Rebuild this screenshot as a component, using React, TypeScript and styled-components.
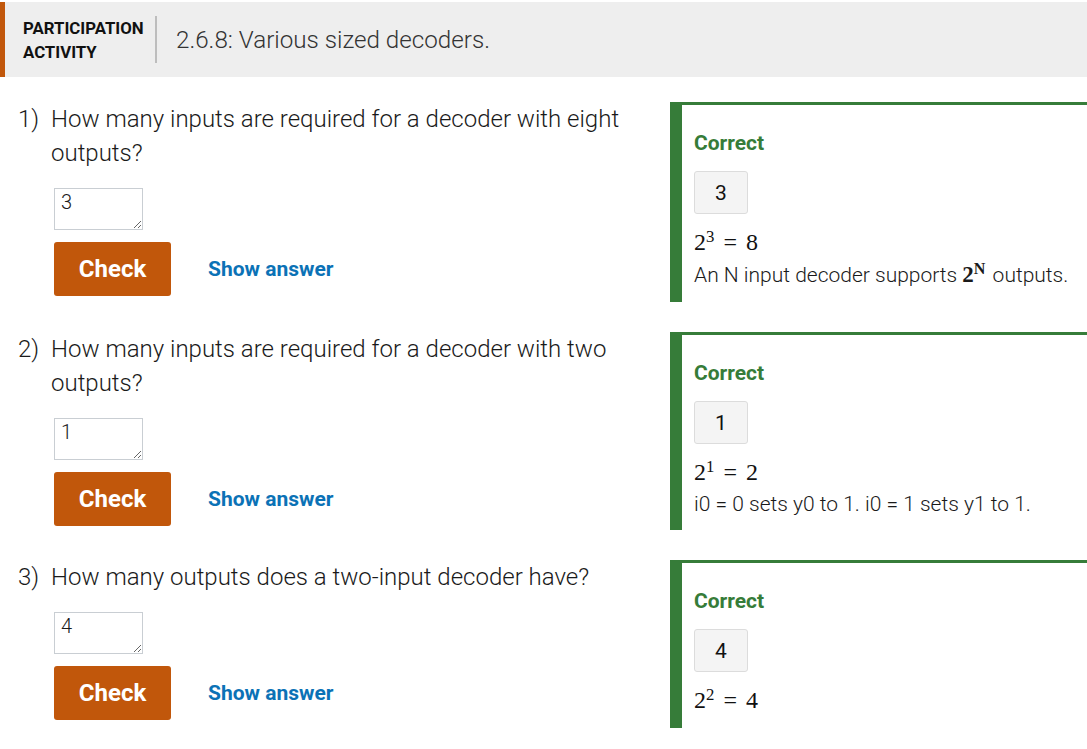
import React from "react";
import styled, { createGlobalStyle } from "styled-components";

const GlobalStyle = createGlobalStyle`
  html, body { margin: 0; padding: 0; background: #ffffff; }
  body { font-family: Roboto, "Liberation Sans", Arial, sans-serif; color: #222; overflow: hidden; }
  * { box-sizing: border-box; }
`;

const Page = styled.div`
  padding-top: 2px;
  width: 1087px;
`;

const Header = styled.header`
  display: flex;
  align-items: center;
  height: 75px;
  background: #eeeeee;
  border-left: 5px solid #c1570b;
`;

const ActivityLabel = styled.div`
  padding-left: 18px;
  width: 150px;
  font-weight: 700;
  font-size: 16.8px;
  line-height: 24px;
  color: #111;
`;

const Divider = styled.div`
  width: 2px;
  height: 47px;
  background: #bdbdbd;
`;

const Title = styled.h1`
  margin: 0 0 0 19px;
  font-size: 24.2px;
  font-weight: 300;
  color: #333;
`;

const List = styled.div`
  display: flex;
  flex-direction: column;
  gap: 30px;
  margin-top: 25px;
`;

const Row = styled.section`
  display: flex;
  align-items: flex-start;
`;

const QuestionCol = styled.div`
  width: 670px;
  flex: none;
  padding-left: 18px;
  padding-right: 20px;
`;

const Prompt = styled.div`
  display: flex;
  font-size: 24px;
  font-weight: 300;
  line-height: 34px;
  color: #1a1a1a;
`;

const Num = styled.span`
  width: 33px;
  flex: none;
`;

const Indent = styled.div`
  padding-left: 36px;
`;

const AnswerInput = styled.textarea`
  display: block;
  margin-top: 18px;
  width: 89px;
  height: 42px;
  border: 1px solid #c9ced3;
  border-radius: 0;
  padding: 1px 6px;
  font-family: Roboto, "Liberation Sans", Arial, sans-serif;
  font-size: 20px;
  font-weight: 300;
  line-height: 24px;
  color: #1a1a1a;
  background: #fff;
`;

const Actions = styled.div`
  display: flex;
  align-items: center;
  margin-top: 12px;
  gap: 37px;
`;

const CheckButton = styled.button`
  width: 117px;
  height: 54px;
  border: none;
  border-radius: 3px;
  background: #c1570b;
  color: #fff;
  font-family: Roboto, "Liberation Sans", Arial, sans-serif;
  font-size: 24px;
  font-weight: 700;
  cursor: pointer;
`;

const ShowAnswer = styled.button`
  border: none;
  background: none;
  padding: 0;
  color: #0b72b6;
  font-family: Roboto, "Liberation Sans", Arial, sans-serif;
  font-size: 21px;
  font-weight: 700;
  cursor: pointer;
`;

const Feedback = styled.div`
  flex: 1;
  border-top: 3px solid #367c39;
  border-left: 12px solid #367c39;
  padding: 26px 0 14px 12px;
`;

const Correct = styled.div`
  font-size: 21px;
  line-height: 24px;
  font-weight: 700;
  color: #367c39;
`;

const AnswerBox = styled.div`
  display: flex;
  align-items: center;
  justify-content: center;
  margin-top: 16px;
  width: 54px;
  height: 43px;
  background: #f4f4f4;
  border: 1px solid #dcdcdc;
  border-radius: 3px;
  font-size: 21px;
  color: #111;
`;

const MathLine = styled.div`
  margin-top: 14px;
  font-family: "Liberation Serif", "Times New Roman", serif;
  font-size: 24px;
  line-height: 28px;
  color: #111;
`;

const Sup = styled.sup<{ $bold?: boolean }>`
  font-size: 0.7em;
  line-height: 0;
  vertical-align: 0.5em;
  font-weight: ${(p) => (p.$bold ? 700 : 400)};
`;

const Op = styled.span`
  padding: 0 9px;
`;

const Explanation = styled.div<{ $tall?: boolean }>`
  margin-top: 6px;
  font-size: 21px;
  font-weight: 300;
  line-height: ${(p) => (p.$tall ? "26px" : "24px")};
  color: #1a1a1a;
`;

const BoldMath = styled.span`
  font-family: "Liberation Serif", "Times New Roman", serif;
  font-weight: 700;
  font-size: 23px;
  margin-right: 2px;
`;

type Q = {
  n: number;
  lines: string[];
  value: string;
  base: string;
  exp: string;
  result: string;
  explanation?: React.ReactNode;
  tall?: boolean;
};

const questions: Q[] = [
  {
    n: 1,
    lines: ["How many inputs are required for a decoder with eight", "outputs?"],
    value: "3",
    base: "2",
    exp: "3",
    result: "8",
    tall: true,
    explanation: (
      <>
        An N input decoder supports{" "}
        <BoldMath>
          2<Sup $bold>N</Sup>
        </BoldMath>{" "}
        outputs.
      </>
    ),
  },
  {
    n: 2,
    lines: ["How many inputs are required for a decoder with two", "outputs?"],
    value: "1",
    base: "2",
    exp: "1",
    result: "2",
    explanation: "i0 = 0 sets y0 to 1. i0 = 1 sets y1 to 1.",
  },
  {
    n: 3,
    lines: ["How many outputs does a two-input decoder have?"],
    value: "4",
    base: "2",
    exp: "2",
    result: "4",
  },
];

export default function App() {
  return (
    <Page>
      <GlobalStyle />
      <Header>
        <ActivityLabel>
          PARTICIPATION
          <br />
          ACTIVITY
        </ActivityLabel>
        <Divider />
        <Title>2.6.8: Various sized decoders.</Title>
      </Header>
      <List>
        {questions.map((q) => (
          <Row key={q.n}>
            <QuestionCol>
              <Prompt>
                <Num>{q.n})</Num>
                <div>
                  {q.lines.map((l, i) => (
                    <div key={i}>{l}</div>
                  ))}
                </div>
              </Prompt>
              <Indent>
                <AnswerInput defaultValue={q.value} />
                <Actions>
                  <CheckButton>Check</CheckButton>
                  <ShowAnswer>Show answer</ShowAnswer>
                </Actions>
              </Indent>
            </QuestionCol>
            <Feedback>
              <Correct>Correct</Correct>
              <AnswerBox>{q.value}</AnswerBox>
              <MathLine>
                {q.base}
                <Sup>{q.exp}</Sup>
                <Op>=</Op>
                {q.result}
              </MathLine>
              {q.explanation && <Explanation $tall={q.tall}>{q.explanation}</Explanation>}
            </Feedback>
          </Row>
        ))}
      </List>
    </Page>
  );
}
